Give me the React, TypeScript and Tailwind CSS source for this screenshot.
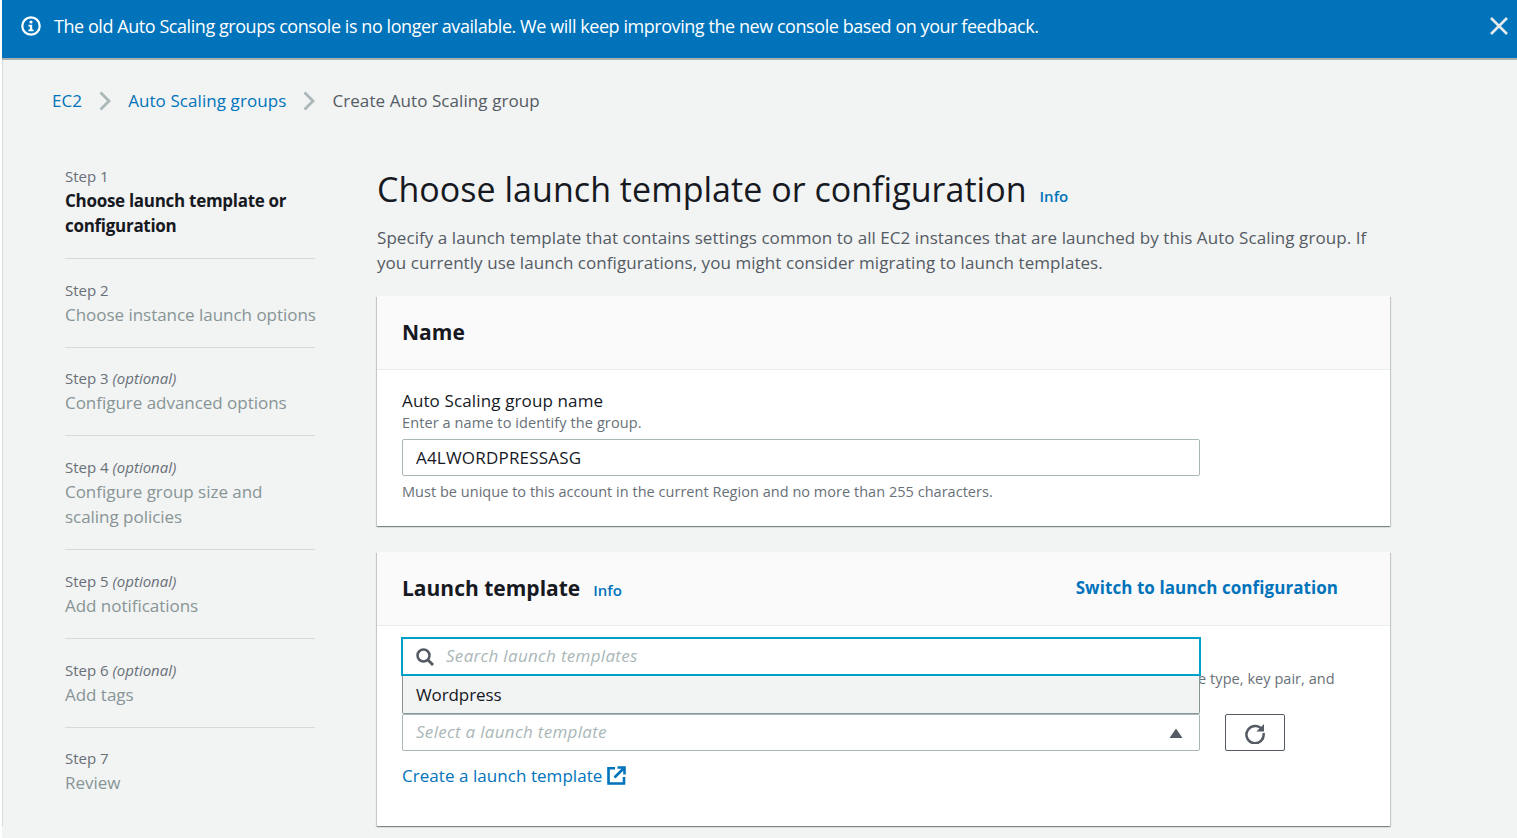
const steps = [
  { label: "Step 1", title: ["Choose launch template or", "configuration"], active: true },
  { label: "Step 2", title: ["Choose instance launch options"] },
  { label: "Step 3", optional: true, title: ["Configure advanced options"] },
  { label: "Step 4", optional: true, title: ["Configure group size and", "scaling policies"] },
  { label: "Step 5", optional: true, title: ["Add notifications"] },
  { label: "Step 6", optional: true, title: ["Add tags"] },
  { label: "Step 7", title: ["Review"] },
];

const Chevron = () => (
  <svg width="12" height="20" viewBox="0 0 12 20" fill="none" className="mx-[17px]">
    <path d="M1.5 1.5 10 10l-8.5 8.5" stroke="#aab7b8" strokeWidth="2.8" />
  </svg>
);

const App = () => {
  return (
    <div className="h-[838px] w-[1517px] overflow-hidden bg-white pl-[2px] font-['Open_Sans','Noto_Sans',sans-serif] text-[#16191f]">
      <div className="h-full bg-[#f2f3f3]">
        {/* banner */}
        <div className="flex h-[60px] items-center border-b-2 border-[#a9b0b2] bg-[#0073bb] pb-[6px] pl-[19px] pr-[3px] text-white">
          <svg width="20" height="20" viewBox="0 0 20 20" fill="none">
            <circle cx="10" cy="10" r="8.7" stroke="white" strokeWidth="2.2" />
            <circle cx="10" cy="6" r="1.6" fill="white" />
            <path d="M7.4 8.8h3.8v4.8h1.4v1.6H7.4v-1.6h1.4v-3.2H7.4z" fill="white" />
          </svg>
          <div className="ml-[13px] flex-1 text-[18px] tracking-[-0.44px]">
            The old Auto Scaling groups console is no longer available. We will keep improving the new console based on your feedback.
          </div>
          <svg width="30" height="30" viewBox="0 0 30 30" fill="none">
            <path d="M7 7l16 16M23 7 7 23" stroke="#e6eaeb" strokeWidth="2.6" />
          </svg>
        </div>

        <div className="border-l border-[#d5dbdb]">
          {/* breadcrumb */}
          <div className="flex h-[83px] items-center pb-[2px] pl-[49px] text-[17px] tracking-[0.08px]">
            <span className="text-[#0073bb]">EC2</span>
            <Chevron />
            <span className="text-[#0073bb]">Auto Scaling groups</span>
            <Chevron />
            <span className="text-[#545b64]">Create Auto Scaling group</span>
          </div>

          <div className="flex pl-[62px]">
            {/* steps */}
            <div className="w-[250px] pt-[23px]">
              {steps.map((s, i) => (
                <div key={s.label} className={i < steps.length - 1 ? "mb-[20.74px] border-b border-[#d5dbdb] pb-[20px]" : ""}>
                  <div className="pb-[2px] text-[15px] leading-[20px] text-[#687078]">
                    {s.label} {s.optional && <i>(optional)</i>}
                  </div>
                  {s.title.map((t) => (
                    <div
                      key={t}
                      className={
                        s.active
                          ? "whitespace-nowrap text-[17px] leading-[25px] font-bold tracking-[-0.29px] text-[#16191f]"
                          : "whitespace-nowrap text-[17px] leading-[25px] tracking-[-0.03px] text-[#879596]"
                      }
                    >
                      {t}
                    </div>
                  ))}
                </div>
              ))}
            </div>

            {/* main */}
            <div className="ml-[62px] w-[1013px]">
              <div className="flex items-baseline pt-[22px]">
                <h1 className="text-[34px] leading-[48px] tracking-[0.03px]">Choose launch template or configuration</h1>
                <span className="ml-[13px] text-[15px] font-semibold text-[#0073bb]">Info</span>
              </div>
              <p className="mt-[12px] w-[1010px] text-[17px] leading-[25px] tracking-[0.06px] text-[#545b64]">
                Specify a launch template that contains settings common to all EC2 instances that are launched by this Auto Scaling group. If you currently use launch configurations, you might consider migrating to launch templates.
              </p>

              {/* name card */}
              <div className="mt-[21px] h-[230px] bg-white shadow-[0_1px_1px_0_rgba(0,28,36,0.3),1px_1px_1px_0_rgba(0,28,36,0.15),-1px_1px_1px_0_rgba(0,28,36,0.15)]">
                <div className="flex h-[74px] items-center border-b border-[#eaeded] bg-[#fafafa] px-[25px] text-[21px] font-bold">
                  Name
                </div>
                <div className="px-[25px] pt-[19px]">
                  <div className="text-[17px] leading-[24px] tracking-[0.13px]">Auto Scaling group name</div>
                  <div className="text-[14.5px] leading-[20px] tracking-[0.1px] text-[#687078]">Enter a name to identify the group.</div>
                  <div className="mt-[6px] flex h-[37px] w-[798px] items-center rounded-[2px] border border-[#aab7b8] bg-white px-[13px] text-[17px] tracking-[0.2px]">
                    A4LWORDPRESSASG
                  </div>
                  <div className="mt-[6px] text-[14.5px] leading-[19px] tracking-[0.03px] text-[#687078]">
                    Must be unique to this account in the current Region and no more than 255 characters.
                  </div>
                </div>
              </div>

              {/* launch template card */}
              <div className="mt-[26px] h-[274px] bg-white shadow-[0_1px_1px_0_rgba(0,28,36,0.3),1px_1px_1px_0_rgba(0,28,36,0.15),-1px_1px_1px_0_rgba(0,28,36,0.15)]">
                <div className="flex h-[74px] items-center border-b border-[#eaeded] bg-[#fafafa] pl-[25px] pr-[52px]">
                  <span className="text-[21px] font-bold">Launch template</span>
                  <span className="ml-[13px] mt-[4px] text-[15px] font-semibold text-[#0073bb]">Info</span>
                  <span className="ml-auto -mt-[2px] text-[17px] font-bold tracking-[0.06px] text-[#0073bb]">Switch to launch configuration</span>
                </div>
                <div className="relative px-[25px] pt-[43px]">
                  {/* mostly covered by the open dropdown */}
                  <p className="h-[40px] w-[960px] text-[14.5px] leading-[20px] tracking-[0.05px] text-[#687078]">
                    Choose a launch template that contains the instance-level settings, such as the Amazon Machine Image (AMI), instance type, key pair, and security groups.
                  </p>
                  <div className="mt-[5px] flex items-center">
                    <div className="flex h-[37px] w-[798px] items-center justify-between rounded-[2px] border border-[#aab7b8] bg-white pl-[13px] pr-[16px] text-[17px] italic tracking-[0.3px] text-[#aab7b8]">
                      <span className="-mt-[2px]">Select a launch template</span>
                      <svg width="14" height="10" viewBox="0 0 14 10">
                        <path d="M7 0.5 13.5 10H0.5z" fill="#545b64" />
                      </svg>
                    </div>
                    <div className="ml-[25px] flex h-[37px] w-[60px] items-center justify-center rounded-[2px] border border-[#545b64]">
                      <svg width="22" height="22" viewBox="0 0 22 22" fill="none">
                        <path d="M18.6 8.5A8.6 8.6 0 1 0 19.5 11" stroke="#545b64" strokeWidth="2.5" />
                        <path d="M20 2v7.6h-7.6z" fill="#545b64" />
                      </svg>
                    </div>
                  </div>
                  <div className="mt-[12px] flex items-center text-[17px] leading-[25px] tracking-[0.05px] text-[#0073bb]">
                    Create a launch template
                    <svg width="19" height="19" viewBox="0 0 19 19" fill="none" className="ml-[5px]">
                      <path d="M8 2.2H1.5v15.3H17V11" stroke="#0073bb" strokeWidth="2.6" />
                      <path d="M7.5 11.5 16.5 2.5M10.5 1.5h7v7" stroke="#0073bb" strokeWidth="2.6" />
                    </svg>
                  </div>

                  {/* open dropdown */}
                  <div className="absolute left-[24px] top-[11px] w-[800px]">
                    <div className="flex h-[39px] items-center border-2 border-[#00a1c9] bg-white pl-[13px] text-[17px] italic tracking-[0.3px] text-[#aab7b8]">
                      <svg width="18" height="18" viewBox="0 0 18 18" fill="none" className="mr-[12px]">
                        <circle cx="7.5" cy="7.5" r="6" stroke="#545b64" strokeWidth="2.5" />
                        <path d="M12 12l5 5" stroke="#545b64" strokeWidth="2.8" />
                      </svg>
                      <span className="-mt-[2px]">Search launch templates</span>
                    </div>
                    <div className="ml-[1px] flex h-[38px] w-[798px] items-center rounded-b-[2px] border border-t-0 border-[#879596] bg-[#f2f3f3] pl-[13px] text-[17px] tracking-[-0.1px] text-[#16191f]">
                      Wordpress
                    </div>
                  </div>
                </div>
              </div>
            </div>
          </div>
        </div>
      </div>
    </div>
  );
};

export default App;
